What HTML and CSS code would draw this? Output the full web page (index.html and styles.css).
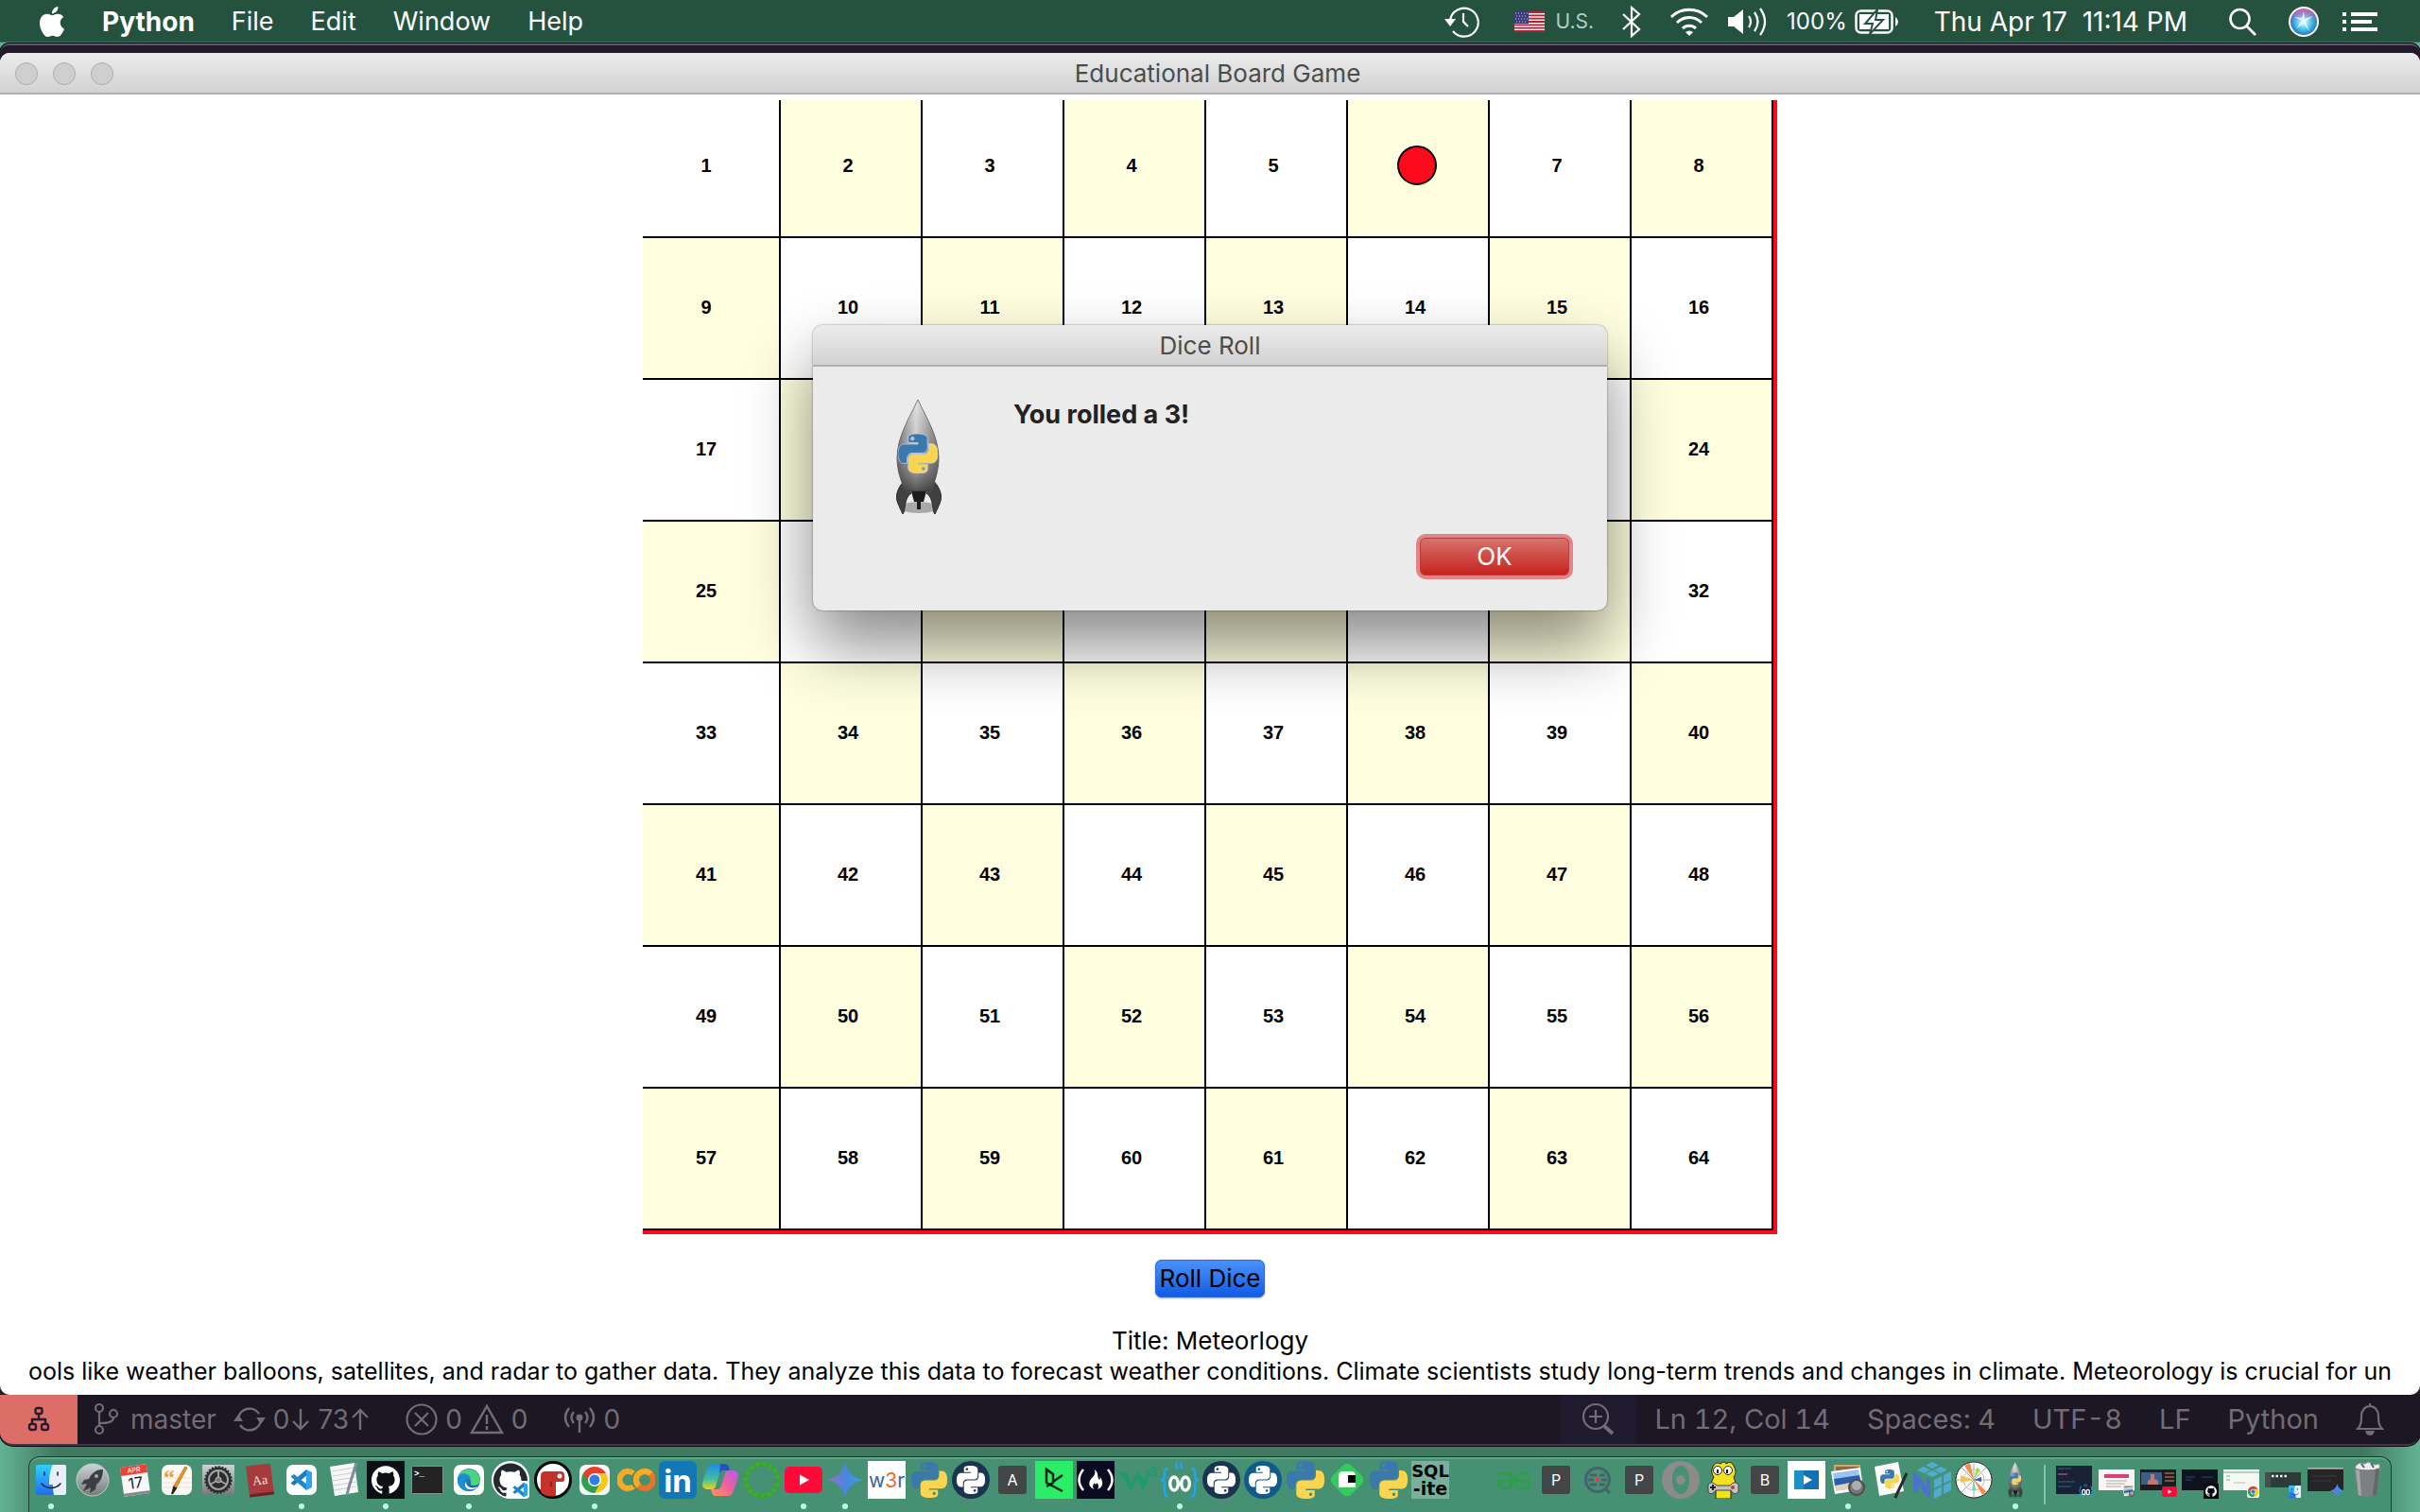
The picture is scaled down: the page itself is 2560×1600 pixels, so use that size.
FILE: index.html
```html
<!DOCTYPE html>
<html lang="en">
<head>
<meta charset="utf-8">
<title>Educational Board Game</title>
<link rel="stylesheet" href="styles.css">
</head>
<body>
<svg class="defs" width="0" height="0" aria-hidden="true">
  <defs>
    <linearGradient id="gSilver" x1="0" x2="1" y1="0" y2="0"><stop offset="0" stop-color="#6d6d6d"/><stop offset=".45" stop-color="#dcdcdc"/><stop offset="1" stop-color="#6d6d6d"/></linearGradient>
    <linearGradient id="gFade" x1="0" x2="0" y1="0" y2="1"><stop offset="0" stop-color="#fff" stop-opacity=".35"/><stop offset=".5" stop-color="#777" stop-opacity=".1"/><stop offset="1" stop-color="#222" stop-opacity=".75"/></linearGradient>
    <linearGradient id="gGray" x1="0" x2="0" y1="0" y2="1"><stop offset="0" stop-color="#c9d3d8"/><stop offset="1" stop-color="#77797a"/></linearGradient>
    <linearGradient id="gFinder" x1="0" x2="0" y1="0" y2="1"><stop offset="0" stop-color="#2fd0fb"/><stop offset="1" stop-color="#1f6cf3"/></linearGradient>
    <linearGradient id="gGem" x1="0" x2="1" y1="0" y2="0"><stop offset="0" stop-color="#9a6cc0"/><stop offset=".5" stop-color="#4a86dc"/><stop offset="1" stop-color="#3aa0e0"/></linearGradient>
    <linearGradient id="gEdge" x1="0" x2="1" y1="0" y2="1"><stop offset="0" stop-color="#2aa6d8"/><stop offset="1" stop-color="#0c4fa5"/></linearGradient>
    <linearGradient id="gCopA" x1="0" x2="0" y1="0" y2="1"><stop offset="0" stop-color="#1b8be8"/><stop offset=".6" stop-color="#3fc0a0"/><stop offset="1" stop-color="#f5d416"/></linearGradient>
    <linearGradient id="gCopB" x1="1" x2="0" y1="0" y2="1"><stop offset="0" stop-color="#b35cf0"/><stop offset=".5" stop-color="#f0609c"/><stop offset="1" stop-color="#ff9a50"/></linearGradient>
    <radialGradient id="gSiri"><stop offset="0" stop-color="#fff"/><stop offset=".25" stop-color="#9be8f5"/><stop offset=".65" stop-color="#35b4e6"/><stop offset="1" stop-color="#3a5fb0"/></radialGradient>
    <linearGradient id="gPink" x1="0" x2="0" y1="0" y2="1"><stop offset="0" stop-color="#e45fb0" stop-opacity=".95"/><stop offset=".5" stop-color="#e45fb0" stop-opacity="0"/></linearGradient>
  </defs>
  <symbol id="py" viewBox="0 0 24 24">
    <path fill="var(--a,#3b78ac)" d="M14.25.18l.9.2.73.26.59.3.45.32.34.34.25.34.16.33.1.3.04.26.02.2-.01.13V8.5l-.05.63-.13.55-.21.46-.26.38-.3.31-.33.25-.35.19-.35.14-.33.1-.3.07-.26.04-.21.02H8.77l-.69.05-.59.14-.5.22-.41.27-.33.32-.27.35-.2.36-.15.37-.1.35-.07.32-.04.27-.02.21v3.06H3.17l-.21-.03-.28-.07-.32-.12-.35-.18-.36-.26-.36-.36-.35-.46-.32-.59-.28-.73-.21-.88-.14-1.05-.05-1.23.06-1.22.16-1.04.24-.87.32-.71.36-.57.4-.44.42-.33.42-.24.4-.16.36-.1.32-.05.24-.01h.16l.06.01h8.16v-.83H6.18l-.01-2.75-.02-.37.05-.34.11-.31.17-.28.25-.26.31-.23.38-.2.44-.18.51-.15.58-.12.64-.1.71-.06.77-.04.84-.02 1.27.05zm-6.3 1.98l-.23.33-.08.41.08.41.23.34.33.22.41.09.41-.09.33-.22.23-.34.08-.41-.08-.41-.23-.33-.33-.22-.41-.09-.41.09z"/>
    <path fill="var(--b,#fcd550)" d="M21.04 6.11l.28.06.32.12.35.18.36.27.36.35.35.47.32.59.28.73.21.88.14 1.04.05 1.23-.06 1.23-.16 1.04-.24.86-.32.71-.36.57-.4.45-.42.33-.42.24-.4.16-.36.09-.32.05-.24.02-.16-.01h-8.22v.82h5.84l.01 2.76.02.36-.05.34-.11.31-.17.29-.25.25-.31.24-.38.2-.44.17-.51.15-.58.13-.64.09-.71.07-.77.04-.84.01-1.27-.04-1.07-.14-.9-.2-.73-.25-.59-.3-.45-.33-.34-.34-.25-.34-.16-.33-.1-.3-.04-.25-.02-.2.01-.13v-5.34l.05-.64.13-.54.21-.46.26-.38.3-.32.33-.24.35-.2.35-.14.33-.1.3-.06.26-.04.21-.02.13-.01h5.84l.69-.05.59-.14.5-.21.41-.28.33-.32.27-.35.2-.36.15-.36.1-.35.07-.32.04-.28.02-.21V6.07h2.09l.14.01zm-6.47 14.25l-.23.33-.08.41.08.41.23.33.33.23.41.08.41-.08.33-.23.23-.33.08-.41-.08-.41-.23-.33-.33-.23-.41-.08-.41.08z"/>
  </symbol>
  <symbol id="gh" viewBox="0 0 24 24"><path d="M12 .297c-6.63 0-12 5.373-12 12 0 5.303 3.438 9.8 8.205 11.385.6.113.82-.258.82-.577 0-.285-.01-1.04-.015-2.04-3.338.724-4.042-1.61-4.042-1.61C4.422 18.07 3.633 17.7 3.633 17.7c-1.087-.744.084-.729.084-.729 1.205.084 1.838 1.236 1.838 1.236 1.07 1.835 2.809 1.305 3.495.998.108-.776.417-1.305.76-1.605-2.665-.3-5.466-1.332-5.466-5.93 0-1.31.465-2.38 1.235-3.22-.135-.303-.54-1.523.105-3.176 0 0 1.005-.322 3.3 1.23.96-.267 1.98-.399 3-.405 1.02.006 2.04.138 3 .405 2.28-1.552 3.285-1.23 3.285-1.23.645 1.653.24 2.873.12 3.176.765.84 1.23 1.91 1.23 3.22 0 4.61-2.805 5.625-5.475 5.92.42.36.81 1.096.81 2.22 0 1.606-.015 2.896-.015 3.286 0 .315.21.69.825.57C20.565 22.092 24 17.592 24 12.297c0-6.627-5.373-12-12-12"/></symbol>
  <symbol id="vs" viewBox="0 0 24 24"><path fill="#1f78c4" d="M17 1l1 6-14 11-3-2v-1z"/><path fill="#1f86d0" d="M1 8l3-2 14 11-1 6L1 9z"/><path fill="#2fa4ee" d="M17 1l6 3v16l-6 3z"/></symbol>
  <symbol id="finder" viewBox="0 0 32 32"><rect width="32" height="32" rx="2" fill="url(#gFinder)"/><path d="M18 0h12a2 2 0 012 2v28a2 2 0 01-2 2H19c-1-4-1-8-1-11h-4C14 12 15 5 18 0z" fill="#e9effa"/><path d="M9 8v3M23 8v3M6 20c5 6 15 6 20 0" fill="none" stroke="#16263c" stroke-width="1.5" stroke-linecap="round"/></symbol>
  <symbol id="chrome" viewBox="0 0 32 32"><rect width="32" height="32" rx="7" fill="#f6f6f4"/><path d="M16 16L3.900 9A14 14 0 0128.100 9z" fill="#e2402f"/><path d="M16 16L28.100 9A14 14 0 0116 30z" fill="#fbc718"/><path d="M16 16v14A14 14 0 013.900 9z" fill="#2da04c"/><path d="M16 9h12.100l-6 10.500z" fill="#fbc718"/><path d="M22 19.500L16 30 10 19.500z" fill="#2da04c"/><path d="M10 19.500L3.900 9 16 9z" fill="#e2402f"/><path d="M3.900 9L10 19.500l2 3z" fill="#2da04c"/><circle cx="16" cy="16" r="7" fill="#fff"/><circle cx="16" cy="16" r="5.500" fill="#2f7de9"/></symbol>
  <symbol id="yt" viewBox="0 0 40 28"><rect width="40" height="28" rx="5" fill="#fe0a38"/><path d="M16 8.500v11l10-5.500z" fill="#fff"/></symbol>
  <symbol id="gem" viewBox="0 0 36 36"><path d="M18 0c2 10 8 16 18 18-10 2-16 8-18 18C16 26 10 20 0 18 10 16 16 10 18 0z" fill="url(#gGem)"/></symbol>
  <symbol id="owl" viewBox="0 0 40 40"><path d="M8 8c-4 0-4 2-4 6 0 4 0 5-3 6 3 1 3 3 3 8 0 6 0 9 4 10M32 8c4 0 4 2 4 6 0 4 0 5 3 6-3 1-3 3-3 8 0 6 0 9-4 10" fill="none" stroke="#1ea8f0" stroke-width="2.500"/><path d="M17 1c-2 3 0 6 1 8M22 1c-2 3 0 6 1 8" fill="none" stroke="#1ea8f0" stroke-width="2"/><ellipse cx="14" cy="24" rx="4.300" ry="7" fill="none" stroke="#fff" stroke-width="3.400"/><ellipse cx="26" cy="24" rx="4.300" ry="7" fill="none" stroke="#fff" stroke-width="3.400"/></symbol>
  <symbol id="rocket" viewBox="0 0 48 122">
    <ellipse cx="24" cy="114" rx="21" ry="6" fill="#000" opacity=".28"/>
    <path d="M8 86C0 96-1 103 2 110l5 11c3-2 1-18 9-22zM40 86c8 10 9 17 6 24l-5 11c-3-2-1-18-9-22z" fill="#404042" stroke="#2c2c2d"/>
    <path d="M23 0C15 18 1 38 1 62c0 12 4 26 10 35h25c5-9 9-23 9-35C45 38 31 18 23 0z" fill="url(#gSilver)" stroke="#666"/>
    <path d="M23 0C15 18 1 38 1 62c0 12 4 26 10 35h25c5-9 9-23 9-35C45 38 31 18 23 0z" fill="url(#gFade)"/>
    <path d="M16 97h16l-3 11h-3v8h-4v-8h-3z" fill="#1d1d1e"/>
    <use href="#py" x="2" y="36" width="42" height="42" stroke="#bcd" stroke-width=".5"/>
  </symbol>
  <symbol id="photo" viewBox="0 0 40 40"><path d="M6 5h26v24H6z" fill="#8a6a3e" stroke="#caa873" stroke-width="2"/><path d="M2 11l31-4 3 23-30 5z" fill="#fff"/><path d="M4 13l27-4 1 7-27 4z" fill="#9dc4ee"/><path d="M5 19l27-4 2 8-28 4z" fill="#2a5fa8"/><path d="M6 26l27-5 1 7-27 4z" fill="#dcd3bd"/><circle cx="29" cy="28" r="8" fill="#777" stroke="#4c4c4c" stroke-width="2"/><circle cx="29" cy="26" r="5" fill="#a9b0b4"/></symbol>
</svg>

<div class="desktop">
  <header class="menubar">
    <nav class="menus">
      <button class="apple" aria-label="Apple"><svg width="28" height="32" viewBox="2 0 20 24"><path fill="currentColor" d="M12.152 6.896c-.948 0-2.415-1.078-3.960-1.040-2.040.027-3.910 1.183-4.961 3.014-2.117 3.675-.546 9.103 1.519 12.090 1.013 1.454 2.208 3.090 3.792 3.039 1.520-.065 2.090-.987 3.935-.987 1.831 0 2.350.987 3.960.948 1.637-.026 2.676-1.480 3.676-2.948 1.156-1.688 1.636-3.325 1.662-3.415-.039-.013-3.182-1.221-3.220-4.857-.026-3.040 2.480-4.494 2.597-4.559-1.429-2.090-3.623-2.324-4.390-2.376-2-.156-3.675 1.090-4.610 1.090zM15.530 3.830c.843-1.012 1.400-2.427 1.245-3.830-1.207.052-2.662.805-3.532 1.818-.780.896-1.454 2.338-1.273 3.714 1.338.104 2.715-.688 3.559-1.701"/></svg></button>
      <button class="app-name">Python</button>
      <button>File</button>
      <button>Edit</button>
      <button>Window</button>
      <button>Help</button>
    </nav>
    <div class="status">
      <svg width="40" height="36" viewBox="0 0 40 36" fill="none" stroke="currentColor" stroke-width="2.200"><path d="M6 16A15 15 0 119 28"/><path d="M0 15h12l-6 8z" fill="currentColor" stroke="none"/><path d="M20 9v9l5 5"/></svg>
      <span class="lang"><svg width="32" height="22" viewBox="0 0 32 22"><path fill="#f5f0f0" d="M0 0h32v22H0z"/><path stroke="#b22234" stroke-width="1.800" d="M0 1h32M0 4.300h32M0 7.600h32M0 11h32M0 14.300h32M0 17.600h32M0 21h32"/><path fill="#3c3b78" d="M0 0h15v13H0z"/><path stroke="#d8d8ea" stroke-dasharray="1 2" d="M1 2h13M2 5h12M1 8h13M2 11h12"/></svg>U.S.</span>
      <svg width="20" height="34" viewBox="0 0 20 34" fill="none" stroke="currentColor" stroke-width="2.200"><path d="M1 9l17 16-8 7V2l8 7L1 25"/></svg>
      <svg width="42" height="32" viewBox="0 0 42 32" fill="none" stroke="currentColor" stroke-width="3"><path d="M2 11a27 27 0 0138 0M8 17a18 18 0 0126 0M14 23a10 10 0 0114 0"/><path d="M21 31l-4-4a6 6 0 018 0z" fill="currentColor" stroke="none"/></svg>
      <svg class="volume" width="42" height="32" viewBox="0 0 42 32" fill="none" stroke="currentColor" stroke-width="2.200"><path d="M0 11h6l10-8v26l-10-8H0z" fill="currentColor" stroke="none"/><path d="M22 10q4 6 0 12M28 6q7 10 0 20M34 2q10 14 0 28"/></svg>
      <span class="battery">100%<svg width="46" height="26" viewBox="0 0 46 26"><rect x="1.500" y="1.500" width="38" height="23" rx="5" fill="none" stroke="currentColor" stroke-width="2.500"/><path d="M43 8v10q3-2 3-5t-3-5z" fill="currentColor"/><path d="M5 5h31v16H5z" fill="currentColor"/><path d="M24 0L11 15h8l-3 11 14-15h-8z" fill="currentColor" stroke="#25523f" stroke-width="2"/></svg></span>
      <time>Thu Apr 17&nbsp; 11:14 PM</time>
      <svg class="search" width="30" height="30" viewBox="0 0 30 30" fill="none" stroke="currentColor" stroke-width="2.600"><circle cx="11.500" cy="12" r="10"/><path d="M18.500 19.500L28 29"/></svg>
      <svg width="34" height="34" viewBox="0 0 34 34"><circle cx="17" cy="17" r="15" fill="url(#gSiri)"/><circle cx="17" cy="17" r="15" fill="url(#gPink)" stroke="#fff" stroke-width="2"/><path d="M17 6l1 8 9-3-8 6 4 10-6-8-8 5 6-8-8-4 8 1z" fill="#e8fbff" opacity=".85"/></svg>
      <svg class="list" width="38" height="22" viewBox="0 0 38 22"><path stroke="currentColor" stroke-width="4" d="M0 3h4M9 3h28M0 11h4M9 11h22M0 19h4M9 19h28"/></svg>
    </div>
  </header>

  <div class="editor">
    <main class="game">
      <div class="titlebar">
        <div class="lights"><i></i><i></i><i></i></div>
        <h1>Educational Board Game</h1>
      </div>
      <div class="game-body">
        <div class="board">
          <ol class="cells">
            <li>1</li><li>2</li><li>3</li><li>4</li><li>5</li><li class="here"><span class="token"></span></li><li>7</li><li>8</li>
            <li>9</li><li>10</li><li>11</li><li>12</li><li>13</li><li>14</li><li>15</li><li>16</li>
            <li>17</li><li>18</li><li>19</li><li>20</li><li>21</li><li>22</li><li>23</li><li>24</li>
            <li>25</li><li>26</li><li>27</li><li>28</li><li>29</li><li>30</li><li>31</li><li>32</li>
            <li>33</li><li>34</li><li>35</li><li>36</li><li>37</li><li>38</li><li>39</li><li>40</li>
            <li>41</li><li>42</li><li>43</li><li>44</li><li>45</li><li>46</li><li>47</li><li>48</li>
            <li>49</li><li>50</li><li>51</li><li>52</li><li>53</li><li>54</li><li>55</li><li>56</li>
            <li>57</li><li>58</li><li>59</li><li>60</li><li>61</li><li>62</li><li>63</li><li>64</li>
          </ol>
        </div>
        <button class="roll">Roll Dice</button>
        <div class="lesson">
          <p>Title: Meteorlogy</p>
          <p class="passage">ools like weather balloons, satellites, and radar to gather data. They analyze this data to forecast weather conditions. Climate scientists study long-term trends and changes in climate. Meteorology is crucial for un</p>
        </div>
      </div>
    </main>

    <footer class="statusbar">
      <button class="remote" aria-label="Remote"><svg width="24" height="28" viewBox="0 0 24 28" fill="none" stroke="currentColor" stroke-width="2.400"><rect x="8.500" y="2" width="7" height="6" rx="2"/><rect x="2" y="19" width="7" height="6" rx="2"/><rect x="15" y="19" width="7" height="6" rx="2"/><path d="M12 8v5M5 18v-4h14v4"/></svg></button>
      <span class="item branch"><svg width="28" height="36" viewBox="0 0 28 36" fill="none" stroke="currentColor" stroke-width="2.200"><circle cx="7" cy="6" r="4"/><circle cx="7" cy="29" r="4"/><circle cx="22" cy="12" r="4"/><path d="M7 10v15M22 16c0 5-6 6-15 6"/></svg>master</span>
      <span class="item sync"><svg width="34" height="28" viewBox="0 0 34 28" fill="none" stroke="currentColor" stroke-width="2.400"><path d="M5 14A12 12 0 0127 8M29 14A12 12 0 017 20"/><path d="M0 16h10l-5-7zM24 12h10l-5 7z" fill="currentColor" stroke="none"/></svg><span class="count">0<svg width="20" height="24" viewBox="0 0 20 24" fill="none" stroke="currentColor" stroke-width="2.400"><path d="M10 1v20M2 14l8 8 8-8"/></svg></span><span class="count">73<svg width="20" height="24" viewBox="0 0 20 24" fill="none" stroke="currentColor" stroke-width="2.400"><path d="M10 23V3M2 10l8-8 8 8"/></svg></span></span>
      <span class="item"><svg width="34" height="34" viewBox="0 0 34 34" fill="none" stroke="currentColor" stroke-width="2.200"><circle cx="17" cy="17" r="15.500"/><path d="M10 10l14 14M24 10L10 24"/></svg>0<svg width="36" height="32" viewBox="0 0 36 32" fill="none" stroke="currentColor" stroke-width="2.400"><path d="M18 2L2 30h32zM18 11v10M18 23v4"/></svg>0</span>
      <span class="item"><svg width="34" height="30" viewBox="0 0 34 30" fill="none" stroke="currentColor" stroke-width="2.400"><path d="M6 3q-8 10 0 20M11 7q-5 6 0 12M28 3q8 10 0 20M23 7q5 6 0 12M17 13v16"/><circle cx="17" cy="13" r="3.500" fill="currentColor" stroke="none"/></svg>0</span>
      <div class="file-info">
        <span class="zoom"><svg width="36" height="36" viewBox="0 0 36 36" fill="none" stroke="currentColor" stroke-width="2.200"><circle cx="15" cy="15" r="13"/><path d="M15 8v14M8 15h14"/><path d="M24 25l9 8" stroke-width="4"/></svg></span>
        <span>Ln 12, Col 14</span>
        <span>Spaces: 4</span>
        <span>UTF-8</span>
        <span>LF</span>
        <span>Python</span>
        <svg width="30" height="34" viewBox="0 0 30 34" fill="none" stroke="currentColor" stroke-width="2.200"><path d="M2 27c4-4 4-8 4-14a9 10 0 0118 0c0 6 0 10 4 14zM15 4V0"/><path d="M10 29h10q-1 5-5 5t-5-5z" fill="currentColor" stroke="none"/></svg>
      </div>
    </footer>
  </div>

  <nav class="dock">
    <div class="apps">
      <button class="on" aria-label="Finder"><svg viewBox="0 0 40 40"><use href="#finder" x="4" y="4" width="32" height="32"/></svg></button>
      <button aria-label="Launchpad"><svg viewBox="0 0 40 40"><circle cx="20" cy="20" r="17" fill="url(#gGray)" stroke="#c5cbcd"/><path d="M31 9c-8 0-13 5-15 10l-5 1-3 5 6-1-4 8 8-4-1 6 6-4 1-5c4-3 7-8 7-16z" fill="#3b3e42"/><circle cx="24" cy="16" r="2" fill="#a5aaad"/></svg></button>
      <button aria-label="Calendar"><svg viewBox="0 0 40 40"><g transform="rotate(-8 20 20)"><rect x="6" y="5" width="28" height="31" rx="1" fill="#f8f8f8"/><path d="M6 5h28v9H6z" fill="#e5443c"/><path d="M6 33h28v3H6z" fill="#888"/><text x="20" y="12" font-size="7" fill="#fff" text-anchor="middle">APR</text><text x="20" y="29" font-size="16" fill="#222" text-anchor="middle">17</text></g></svg></button>
      <button aria-label="Pages"><svg viewBox="0 0 40 40"><rect x="4" y="4" width="32" height="32" rx="7" fill="#fcfaf7"/><path d="M4 18h32M4 23h32M4 28h32" stroke="#f0ddcb"/><text x="6" y="25" font-size="24" font-weight="700" fill="#f19d33" font-family="Liberation Serif, serif">“</text><path d="M29 6l2 1-12 22-3-1z" fill="#f2981f" stroke="#c87810"/><path d="M17 28l2 1-4 6z" fill="#222" stroke="#222" stroke-width="2"/></svg></button>
      <button aria-label="System Preferences"><svg viewBox="0 0 40 40"><rect x="3" y="4" width="34" height="32" rx="1" fill="url(#gGray)"/><circle cx="20" cy="20" r="13.500" fill="#2c2c2c" stroke="#2c2c2c" stroke-dasharray="2 1.500" stroke-width="2.500"/><circle cx="20" cy="20" r="10" fill="none" stroke="#a0a4a6" stroke-width="2"/><path d="M20 20V10M20 20l9 5M20 20l-9 5" stroke="#a0a4a6" stroke-width="2"/><circle cx="20" cy="20" r="3" fill="#777" stroke="#bbb"/></svg></button>
      <button aria-label="Dictionary"><svg viewBox="0 0 40 40"><g transform="rotate(-7 20 20)"><rect x="7" y="4" width="26" height="33" rx="1" fill="#a63a3c"/><path d="M7 34h26v3H7z" fill="#6f2022"/><text x="20" y="25" font-size="14" fill="#f3dede" text-anchor="middle" font-family="Liberation Serif, serif">Aa</text></g></svg></button>
      <button class="on" aria-label="Visual Studio Code"><svg viewBox="0 0 40 40"><rect x="4" y="4" width="32" height="32" rx="7" fill="#fff"/><use href="#vs" x="8" y="8" width="24" height="24"/></svg></button>
      <button aria-label="TextEdit"><svg viewBox="0 0 40 40"><path d="M5 6l26-4 4 31-25 4z" fill="#f7f7f5"/><path d="M7 11l24-4M8 16l24-4M8 21l24-4M9 26l24-4M9 31l24-4" stroke="#c9ced2"/><path d="M33 2l-8 26-2 8" fill="none" stroke="#7d8fa0" stroke-width="3"/></svg></button>
      <button class="on" aria-label="GitHub"><svg viewBox="0 0 40 40"><path d="M0 0h40v40H0z" fill="#0c1014"/><use href="#gh" x="5" y="5" width="30" height="30" fill="#fff"/></svg></button>
      <button aria-label="Terminal"><svg viewBox="0 0 40 40"><rect x="3.500" y="5.500" width="33" height="29" rx="1" fill="#232323" stroke="#8f8f8f"/><text x="6" y="16" font-size="9" font-weight="700" fill="#fff" font-family="Liberation Mono, monospace">&gt;_</text></svg></button>
      <button class="on" aria-label="Edge"><svg viewBox="0 0 40 40"><rect x="4" y="4" width="32" height="32" rx="7" fill="#fff"/><circle cx="20" cy="20" r="12" fill="url(#gEdge)"/><path d="M9 16a12 12 0 0123 4c0 4-3 6-7 6-3 0-4-1-3-3 1-6-7-9-13-7z" fill="#4fd37b"/><path d="M9 16c4-5 12-3 13 3-4-2-8 1-7 6 1 4 5 6 8 6-8 3-14-3-15-9z" fill="#1b8fd6"/><path d="M17 22c0 6 7 8 12 5-3 5-12 4-13-1 0-2 0-3 1-4z" fill="#fff"/></svg></button>
      <button aria-label="GitHub Codespaces"><svg viewBox="0 0 40 40"><circle cx="20" cy="20" r="20" fill="#fff"/><use href="#gh" x="2" y="2" width="36" height="36" fill="#24292e"/><rect x="21" y="21" width="19" height="19" rx="4" fill="#fff"/><use href="#vs" x="22" y="22" width="17" height="17"/></svg></button>
      <button aria-label="Replit"><svg viewBox="0 0 40 40"><circle cx="20" cy="20" r="18.500" fill="#fff" stroke="#080808" stroke-width="3"/><path d="M7 33V16q0-5 5-5h16q4 0 4 4v5q0 2-2 2H23v15q-10 2-16-4z" fill="#c5322c"/><path d="M18 22v5" stroke="#8d1f1c" stroke-width="2"/><circle cx="27" cy="16" r="2.500" fill="#fff"/></svg></button>
      <button class="on" aria-label="Chrome"><svg viewBox="0 0 40 40"><use href="#chrome" x="4" y="4" width="32" height="32"/></svg></button>
      <button aria-label="Colab"><svg viewBox="0 0 40 40" fill="none" stroke-width="6"><path d="M17 13a9 9 0 100 14" stroke="#f9ab26"/><circle cx="29" cy="20" r="9" stroke="#e8742a"/><path d="M22.600 26.400a9 9 0 0112.700-12.800" stroke="#f9ab26"/></svg></button>
      <button aria-label="LinkedIn"><svg viewBox="0 0 40 40"><rect width="40" height="40" rx="6" fill="#1277b5"/><text x="20" y="33" font-size="33" font-weight="700" fill="#fff" text-anchor="middle">in</text></svg></button>
      <button aria-label="Copilot"><svg viewBox="0 0 40 40"><path d="M12 3h13c3 0 4 3 5 7h-6c-4 0-5 3-6 7l-3 10c-1 3-3 3-7 3-7 0-8-4-6-10l4-11c1-4 3-6 6-6z" fill="url(#gCopA)"/><path d="M28 37H15c-3 0-4-3-5-7h6c4 0 5-3 6-7l3-10c1-3 3-3 7-3 7 0 8 4 6 10l-4 11c-1 4-3 6-6 6z" fill="url(#gCopB)"/><path d="M20 3h5c3 0 4 3 5 7h-6c-2 0-4 1-5 4z" fill="#2351c8"/></svg></button>
      <button aria-label="Ring"><svg viewBox="0 0 40 40"><circle cx="20" cy="20" r="17" fill="none" stroke="#3fae2a" stroke-width="4"/><circle cx="20" cy="20" r="17" fill="none" stroke="#37a42d" stroke-width="4" stroke-dasharray="3 4"/></svg></button>
      <button class="on" aria-label="YouTube"><svg viewBox="0 0 40 40"><use href="#yt" x="0" y="6" width="40" height="28"/></svg></button>
      <button class="on" aria-label="Gemini"><svg viewBox="0 0 40 40"><use href="#gem" x="1" y="1" width="38" height="38"/></svg></button>
      <button aria-label="w3resource"><svg viewBox="0 0 40 40"><path d="M0 0h40v40H0z" fill="#fff"/><text x="20" y="28" font-size="21" text-anchor="middle" fill="#3a5fa0">w<tspan fill="#ef6a2e">3</tspan>r</text></svg></button>
      <button aria-label="Python"><svg viewBox="0 0 40 40"><use href="#py" x="1" y="1" width="38" height="38"/></svg></button>
      <button aria-label="Real Python"><svg viewBox="0 0 40 40"><circle cx="20" cy="20" r="20" fill="#1b3550"/><use class="white" href="#py" x="5" y="5" width="30" height="30"/></svg></button>
      <button aria-label="A"><svg viewBox="0 0 40 40"><rect x="5" y="5" width="30" height="30" rx="3" fill="#444546"/><text x="20" y="26" font-size="16" fill="#fff" text-anchor="middle">A</text></svg></button>
      <button aria-label="DataCamp"><svg viewBox="0 0 40 40"><path d="M0 0h40v40H0z" fill="#2bee66"/><path d="M29 32L12 23V9l7 5v9l-7 4M19 22l10-7" fill="none" stroke="#06201c" stroke-width="2.500"/></svg></button>
      <button aria-label="freeCodeCamp"><svg viewBox="0 0 40 40"><path d="M0 0h40v40H0z" fill="#0a0a23"/><path d="M7 9q-9 11 0 22M33 9q9 11 0 22" fill="none" stroke="#fff" stroke-width="2.500"/><path d="M19 9c5 4 2 8 5 11 1-1 1-2 0-4 5 6 4 12-2 14 2-3 1-5-1-7 0 2-2 2-2 0-2 2-3 5 0 7-7-2-7-8-3-12 3-3 4-5 3-9z" fill="#fff"/></svg></button>
      <button aria-label="W3Schools"><svg viewBox="0 0 40 40"><path d="M0 11h7l6 13 4-9 4-4 5 9 4-9h3l-7 21-8-13-6 13z" fill="#1e9c6c"/><text x="31" y="17" font-size="14" font-weight="700" fill="#1e9c6c">3</text></svg></button>
      <button class="on" aria-label="Owl"><svg viewBox="0 0 40 40"><use href="#owl" width="40" height="40"/></svg></button>
      <button aria-label="Real Python"><svg viewBox="0 0 40 40"><circle cx="20" cy="20" r="20" fill="#1b3550"/><use class="white" href="#py" x="5" y="5" width="30" height="30"/></svg></button>
      <button aria-label="Real Python"><svg viewBox="0 0 40 40"><circle cx="20" cy="20" r="20" fill="#125a8c"/><use class="white" href="#py" x="5" y="5" width="30" height="30"/></svg></button>
      <button aria-label="Python"><svg viewBox="0 0 40 40"><use href="#py" width="40" height="40"/></svg></button>
      <button aria-label="Programiz"><svg viewBox="0 0 40 40"><rect x="6" y="6" width="28" height="28" rx="6" fill="#35cb5c" transform="rotate(45 20 20)"/><path d="M11 28V16q0-5 5-5h8q5 0 5 5v12z" fill="#fff"/><path d="M21 15h8v8h-8z" fill="#050505"/></svg></button>
      <button aria-label="Python"><svg viewBox="0 0 40 40"><use href="#py" width="40" height="40"/></svg></button>
      <button aria-label="SQLite"><svg viewBox="0 0 40 40"><path d="M0 0h40v40H0z" fill="#79b09b"/><g font-family="DejaVu Sans, sans-serif" font-weight="700" fill="#060606" text-anchor="middle"><text x="20" y="17" font-size="18">SQL</text><text x="20" y="36" font-size="19">-ite</text></g></svg></button>
      <span></span>
      <button aria-label="GeeksforGeeks"><svg viewBox="0 0 40 40" fill="none" stroke="#2f9e49" stroke-width="3"><path d="M4 14q14-4 14 7 0 8-8 8-7 0-7-8h33q0 8-7 8-8 0-8-8 0-11 14-7"/></svg></button>
      <button aria-label="P"><svg viewBox="0 0 40 40"><rect x="5" y="5" width="30" height="30" rx="3" fill="#444546"/><text x="20" y="26" font-size="16" fill="#fff" text-anchor="middle">P</text></svg></button>
      <button aria-label="Query"><svg viewBox="0 0 40 40" fill="none" stroke="#46636b" stroke-width="3"><circle cx="20" cy="20" r="12.500"/><path d="M28 29l5 5M12 15h7M22 15h6M10 20h6M24 20h6M12 25h7M22 25h6"/><path d="M18 20h4" stroke="#e8384a" stroke-width="4"/></svg></button>
      <button aria-label="P"><svg viewBox="0 0 40 40"><rect x="5" y="5" width="30" height="30" rx="3" fill="#444546"/><text x="20" y="26" font-size="16" fill="#fff" text-anchor="middle">P</text></svg></button>
      <button aria-label="Oracle"><svg viewBox="0 0 40 40"><path fill-rule="evenodd" d="M20 0a20 20 0 010 40 20 20 0 010-40zm0 5c-6 0-9 7-9 15s3 15 9 15 9-7 9-15-3-15-9-15z" fill="#8b8b8b"/><circle cx="20" cy="20" r="5" fill="#8b8b8b"/></svg></button>
      <button aria-label="Pygame"><svg viewBox="0 0 40 40"><path d="M9 6q3-6 8-3 5-4 6 0 5-4 8 2 4 7 0 12l2 6-5 5v12H12V29l-5-6 3-6q-4-5-1-11z" fill="#f2e21c" stroke="#222"/><circle cx="14" cy="10" r="4.500" fill="#fff" stroke="#222"/><circle cx="25" cy="10" r="4.500" fill="#fff" stroke="#222"/><path d="M14 9v4M24 9v4" stroke="#111" stroke-width="2"/><path d="M4 25q4-5 9 1h14q5-6 9-1v8q-5 4-8-2H12q-4 6-8 2z" fill="#c4c4c4" stroke="#444"/><path d="M6 28h6M9 25v6" stroke="#222" stroke-width="2"/><circle cx="30" cy="28" r="2" fill="#c33"/></svg></button>
      <button aria-label="B"><svg viewBox="0 0 40 40"><rect x="5" y="5" width="30" height="30" rx="3" fill="#444546"/><text x="20" y="26" font-size="16" fill="#fff" text-anchor="middle">B</text></svg></button>
      <button aria-label="Video"><svg viewBox="0 0 40 40"><path d="M0 0h40v40H0z" fill="#fff"/><path d="M7 10h26v20H7z" fill="#1a8fc8"/><path d="M17 10h16v20H17z" fill="#1370b4"/><path d="M17 15v10l9-5z" fill="#fff"/></svg></button>
      <button class="on" aria-label="Preview"><svg viewBox="0 0 40 40"><use href="#photo" width="40" height="40"/></svg></button>
      <button aria-label="IDLE"><svg viewBox="0 0 40 40"><path d="M3 6l25-5 6 31-26 5z" fill="#fafafa"/><use href="#py" x="8" y="9" width="22" height="20"/><path d="M37 13L27 34l-2 5" fill="none" stroke="#26282a" stroke-width="3"/></svg></button>
      <button aria-label="NumPy"><svg viewBox="0 0 40 40"><path d="M20 1l7 3.500-7 3.500-7-3.500zM11 6l7 3.500-7 3.500-7-3.500zM29 6l7 3.500-7 3.500-7-3.500zM20 10l7 3.500-7 3.500-7-3.500zM22 20l8-4v9l-8 4zM32 15l8-4v9l-8 4zM22 31l8-4v9l-8 4zM32 26l8-4v9l-8 4z" fill="#4fabd0"/><path d="M0 12l6 3 8 13V18l4 2v19l-6-3-7-12v10l-5-3z" fill="#4a74cc"/></svg></button>
      <button aria-label="Matplotlib"><svg viewBox="0 0 40 40"><circle cx="20" cy="20" r="19" fill="#fff" stroke="#222"/><path d="M20 1v38M1 20h38M7 7l26 26M33 7L7 33" stroke="#aaa"/><circle cx="20" cy="20" r="11" fill="none" stroke="#bbb"/><path d="M20 20L10 5l6-3zM20 20l9 16 4-4z" fill="#f58a4c"/><path d="M20 20L6 15v8z" fill="#f3c455"/><path d="M20 20l3-13 4 2z" fill="#a5d84e"/><path d="M20 20l8-3v5z" fill="#3b5db4"/><path d="M20 20l-2 11h4z" fill="#6fd6b0"/></svg></button>
      <button class="on" aria-label="Python Launcher"><svg viewBox="0 0 40 40"><use href="#rocket" x="12" y="1" width="16" height="38"/></svg></button>
    </div>
    <hr>
    <div class="windows">
      <button aria-label="Editor window"><svg viewBox="0 0 40 40"><path d="M1 5h38v30H1z" fill="#172236"/><path d="M3 8h14M3 22h18M3 27h14" stroke="#3c5f80"/><path d="M3 14h10" stroke="#d86a9a"/><use href="#owl" x="25" y="24" width="15" height="15"/></svg></button>
      <button aria-label="Document window"><svg viewBox="0 0 40 40"><path d="M1 9h38v22H1z" fill="#f8f6f4"/><path d="M7 16h26" stroke="#da3f78" stroke-width="4"/><path d="M9 21h22M9 24h20M9 27h16" stroke="#aaa"/><use href="#photo" x="26" y="25" width="14" height="14"/></svg></button>
      <button aria-label="Video window"><svg viewBox="0 0 40 40"><path d="M1 9h38v22H1z" fill="#1c1c1e"/><path d="M2 12h22v13H2z" fill="#3c5f88"/><path d="M9 25v-4l3-2v-5h4v5l4 2v4z" fill="#b97a70"/><path d="M27 13h10M27 17h10M27 21h10" stroke="#80504a" stroke-width="2"/><use href="#yt" x="24" y="27" width="16" height="11"/></svg></button>
      <button aria-label="Code window"><svg viewBox="0 0 40 40"><path d="M1 9h38v22H1z" fill="#0e141f"/><path d="M5 17h10M5 20h7M22 17h12" stroke="#34435a"/><path d="M24 24h16v16H24z" fill="#08090c"/><use href="#gh" x="26" y="26" width="12" height="12" fill="#fff"/></svg></button>
      <button aria-label="Browser window"><svg viewBox="0 0 40 40"><path d="M1 9h38v22H1z" fill="#f3f8f4"/><path d="M1 12h38M4 16h4M4 20h4" stroke="#b5d4bd" stroke-width="2"/><path d="M12 23h12" stroke="#bbb"/><use href="#chrome" x="26" y="26" width="13" height="13"/></svg></button>
      <button aria-label="Finder window"><svg viewBox="0 0 40 40"><path d="M1 12h38v16H1z" fill="#2d3a36"/><path d="M1 12h6v16H1z" fill="#44504c"/><path d="M8 16h18" stroke="#e8f4f4" stroke-width="2.500" stroke-dasharray="2.500 2"/><use href="#finder" x="26" y="26" width="13" height="13"/></svg></button>
      <button aria-label="Chat window"><svg viewBox="0 0 40 40"><path d="M1 8h38v24H1z" fill="#252528"/><path d="M1 8h38" stroke="#f4dfe4"/><path d="M6 16h26M6 21h20" stroke="#3c3c40"/><use href="#gem" x="25" y="24" width="15" height="15"/></svg></button>
      <button aria-label="Trash"><svg viewBox="0 0 40 40"><path d="M8 5l4-3 5 1 5-2 6 3 5-1 1 7H7z" fill="#ececec" stroke="#8a8a8a"/><path d="M14 3l3 4M24 2l3 5" stroke="#4a6a80" stroke-width="2"/><path d="M6 7q14 5 28 0l-4 29q-10 4-20 0z" fill="#7d8080"/><path d="M8 9l3 27 3 1-2-27z" fill="#a5a8a8"/><path d="M29 9l-3 28 4-1 3-28z" fill="#646767"/></svg></button>
    </div>
  </nav>
</div>

<section class="dialog" role="dialog" aria-labelledby="dlg-title">
  <h2 class="titlebar" id="dlg-title">Dice Roll</h2>
  <div class="dialog-body">
    <svg class="dialog-icon" width="48" height="122"><use href="#rocket" width="48" height="122"/></svg>
    <p>You rolled a 3!</p>
    <button class="ok">OK</button>
  </div>
</section>
</body>
</html>
```
FILE: styles.css
```css
* { box-sizing: border-box; }

body {
  margin: 0;
  position: relative;
  overflow: hidden;
  font-family: Inter, "Liberation Sans", sans-serif;
  font-size: 26px;
  line-height: 32px;
  color: #000;
}

h1, h2, p, ol { margin: 0; padding: 0; font-weight: 400; font-size: inherit; }

button {
  border: 0;
  padding: 0;
  background: none;
  font: inherit;
  color: inherit;
}

svg { display: block; flex: none; }
.defs { position: absolute; }

.desktop {
  min-height: 100vh;
  display: flex;
  flex-direction: column;
  background: linear-gradient(90deg, #62b394, #417860 60px, #417860 calc(100% - 60px), #62b394);
}

/* Menu bar */
.menubar {
  height: 45px;
  display: flex;
  justify-content: space-between;
  align-items: center;
  padding: 1px 44px 0 41px;
  background: #25523f;
  border-bottom: 1px solid #3a7460;
  color: #fff;
  font-size: 27px;
}
.menus { display: flex; align-items: center; gap: 39px; }
.app-name { font-size: 28px; font-weight: 700; }
.status { display: flex; align-items: center; gap: 30px; }
.lang { display: flex; align-items: center; gap: 12px; margin-left: 4px; font-size: 21px; color: #b4cdc3; }
.volume { margin-left: -10px; }
.battery { display: flex; align-items: center; gap: 8px; margin: 0 8px 0 -10px; font-size: 24px; }
.search { margin: 0 2px 0 14px; }
.list { margin-left: -6px; }
.menubar time { font-size: 28px; white-space: nowrap; }

/* Editor window behind the game */
.editor {
  flex: 1;
  display: flex;
  flex-direction: column;
  margin-top: 1px;
  padding-top: 8px;
  background: #221a2c;
  border: 2px solid #5e5866;
  border-width: 2px 0;
  border-bottom-color: #3e3846;
  border-radius: 10px 10px 14px 14px;
  box-shadow: 0 0 0 1px #0b0b0d;
  overflow: hidden;
}

/* Game window */
.game {
  flex: 1;
  display: flex;
  flex-direction: column;
  background: #fff;
  border-radius: 10px;
  overflow: hidden;
}
.titlebar {
  height: 44px;
  display: flex;
  align-items: center;
  justify-content: center;
  padding-top: 2px;
  background: linear-gradient(#ececec, #d2d2d2);
  border-bottom: 2px solid #b0b0b0;
  color: #4c4c4c;
}
.lights { flex: 1; display: flex; gap: 16px; padding-left: 16px; }
.lights i {
  width: 24px;
  height: 24px;
  border: 1px solid #acacac;
  border-radius: 50%;
  background: #cfcfcf;
}
.game .titlebar::after { content: ""; flex: 1; }

.game-body {
  flex: 1;
  display: flex;
  flex-direction: column;
  align-items: center;
  padding-top: 6px;
}
.board {
  width: 1200px;
  overflow: hidden;
  border: solid #ff0a1a;
  border-width: 0 4px 4px 0;
}
.cells {
  display: grid;
  grid-template-columns: repeat(8, 150px);
  grid-auto-rows: 150px;
  margin: -4px 0 0 -4px;
  list-style: none;
  font: 700 20px "Liberation Sans", sans-serif;
}
.cells li {
  display: flex;
  align-items: center;
  justify-content: center;
  padding: 0 6px 2px 0;
  border: solid #000;
  border-width: 0 2px 2px 0;
}
.cells .here { padding-right: 2px; }
.cells li:nth-child(16n+2), .cells li:nth-child(16n+4),
.cells li:nth-child(16n+6), .cells li:nth-child(16n+8),
.cells li:nth-child(16n+9), .cells li:nth-child(16n+11),
.cells li:nth-child(16n+13), .cells li:nth-child(16n+15) { background: #ffffe0; }
.token {
  width: 42px;
  height: 42px;
  border: 2px solid #000;
  border-radius: 50%;
  background: #ff0a1a;
}

.roll {
  height: 40px;
  margin-top: 27px;
  padding: 0 5px;
  border-radius: 7px;
  background: linear-gradient(#4b94fc, #1159e2);
  box-shadow: inset 0 0 0 1px #2a6ce0, 0 1px 2px #0005;
}
.lesson {
  width: 100%;
  margin-top: 30px;
  display: flex;
  flex-direction: column;
  align-items: center;
  overflow: hidden;
  white-space: nowrap;
}
.passage { font-size: 25px; }

/* Editor status bar */
.statusbar {
  height: 52px;
  display: flex;
  align-items: center;
  gap: 38px;
  padding: 0 38px 0 0;
  background: #1d1723;
  color: #716c76;
  font-size: 28px;
}
.remote {
  width: 82px;
  align-self: stretch;
  display: grid;
  place-items: center;
  background: #dc6e67;
  color: #2a1b2c;
}
.item, .count { display: flex; align-items: center; gap: 8px; }
.branch { margin-left: -22px; gap: 12px; }
.sync { margin-left: -20px; }
.count { gap: 2px; }
.file-info {
  flex: 1;
  align-self: stretch;
  display: flex;
  align-items: center;
  justify-content: flex-end;
  gap: 39px;
  font-size: 29px;
  font-variant-numeric: tabular-nums;
}
.zoom {
  align-self: stretch;
  width: 80px;
  display: grid;
  place-items: center;
  margin-right: -20px;
  background: #1f1a2e;
}

/* Dock */
.dock {
  height: 59px;
  display: flex;
  margin: 11px 30px 0;
  padding: 3px 3px 0 1px;
  background: #469074;
  border: solid #1d3a2e;
  border-width: 1px 1px 0;
  border-radius: 12px 12px 0 0;
  box-shadow: inset 0 2px 0 #62a68a;
}
.apps, .windows { display: grid; grid-auto-flow: column; grid-auto-columns: 1fr; }
.apps { flex: 48; }
.windows { flex: 8; }
.dock button { display: flex; flex-direction: column; align-items: center; gap: 5px; padding-top: 1px; }
.dock button svg { width: 40px; height: 40px; }
.dock .on::after {
  content: "";
  width: 6px;
  height: 6px;
  border-radius: 50%;
  background: #bfffe9;
}
.dock hr { width: 2px; height: 42px; margin: 5px 8px; border: 0; background: #7fc4a8; }
.white { --a: #fff; --b: #fff; }

/* Message box floating over the game */
.dialog {
  position: absolute;
  top: 344px;
  left: calc(50% - 420px);
  width: 840px;
  background: #ebebeb;
  border-radius: 10px;
  overflow: hidden;
  box-shadow: 0 0 2px #0008, 0 36px 70px #0007;
}
.dialog-body {
  display: grid;
  grid-template-columns: 124px 1fr;
  padding: 35px 40px 37px 88px;
}
.dialog-icon { grid-row: span 2; }
.dialog p { font-size: 27px; font-weight: 700; color: #222; }
.ok {
  justify-self: end;
  align-self: end;
  width: 158px;
  height: 40px;
  margin-top: 114px;
  border-radius: 6px;
  background: linear-gradient(#d8756f, #c6201b);
  box-shadow: inset 0 0 0 1px #c8383a, 0 0 0 4px #e0868b;
  color: #fff;
}
```
